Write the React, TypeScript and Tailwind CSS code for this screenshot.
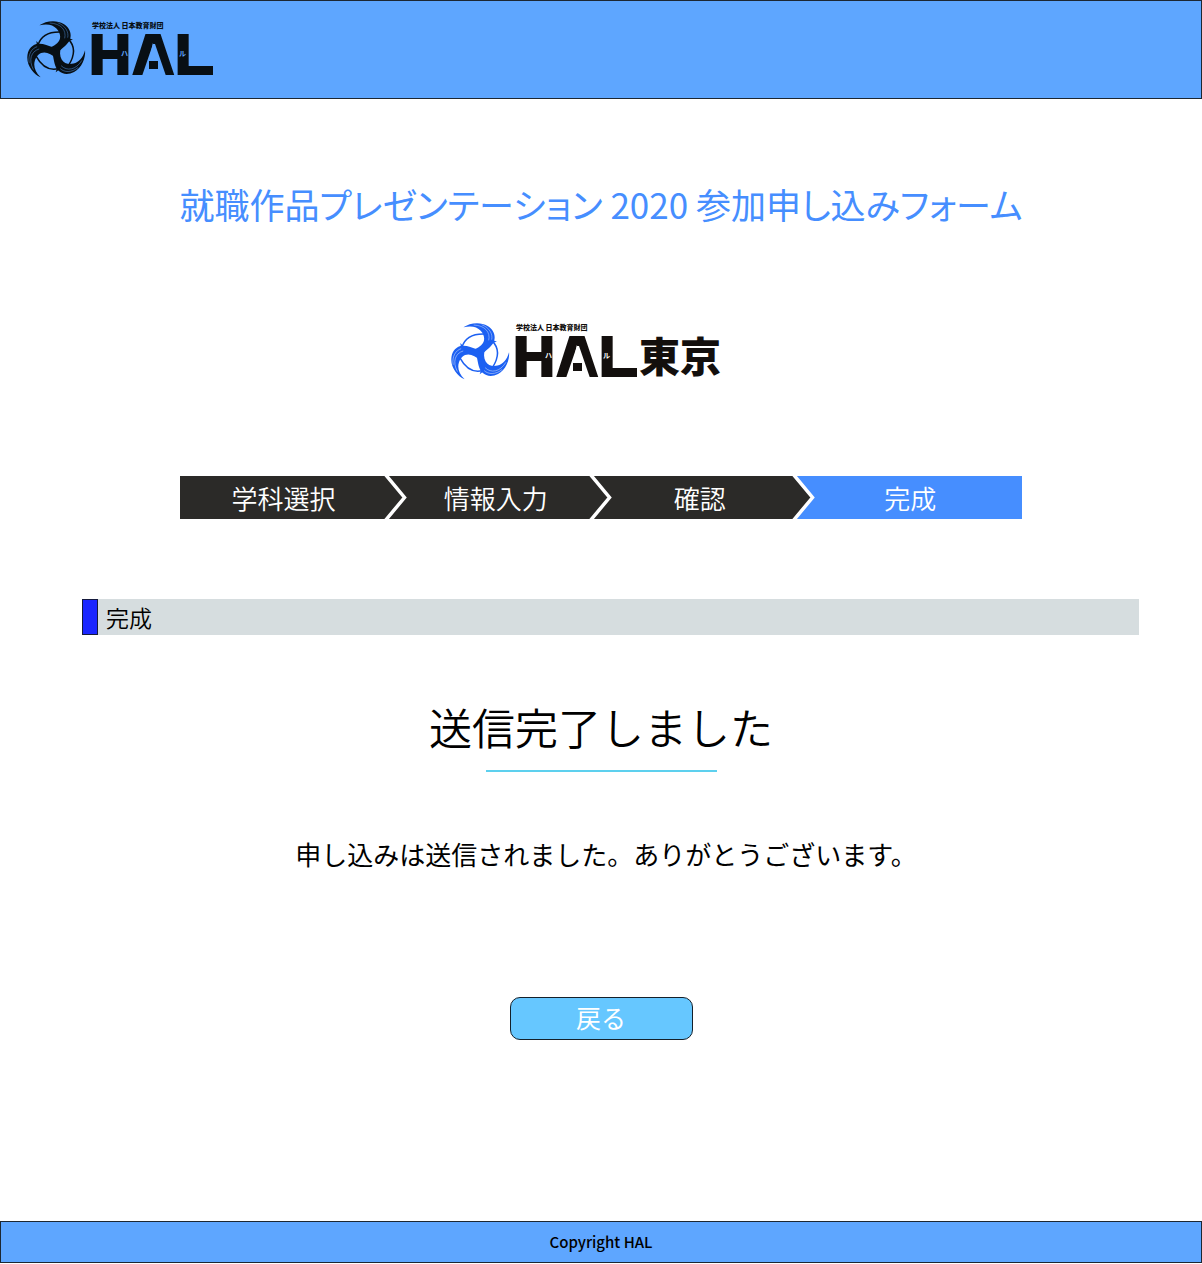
import React from "react";

const steps = [
  { label: "学科選択", pad: "" },
  { label: "情報入力", pad: "pl-3" },
  { label: "確認", pad: "pl-3" },
  { label: "完成", pad: "pl-1" },
];

function EmblemArm({ angle, cut }: { angle: number; cut: string }) {
  return (
    <g transform={`rotate(${angle})`}>
      <path d="M-47-77C-28-91 4-95 26-81C42-71 50-56 46-38C42-22 26-12 11 2L-8 4L-22-9C-6-12 6-20 12-30C19-42 15-56 5-67C-6-79-24-83-47-77Z" />
      <path d="M-56-30L-54-14L-36-14L-47-20Z" />
      <path d="M-51-17C-44-42-22-58 16-57" fill="none" stroke="currentColor" strokeWidth="4.5" />
      <path
        d="M-16-84C18-83 35-62 29-38M8-85C32-76 42-56 38-40"
        fill="none"
        stroke={cut}
        strokeWidth="1.2"
      />
    </g>
  );
}

function Logo({
  emblem,
  ink,
  paper,
  campus,
}: {
  emblem: string;
  ink: string;
  paper: string;
  campus?: string;
}) {
  const width = campus ? 270 : 187;
  return (
    <svg
      width={width}
      height="72"
      viewBox={`0 0 ${width} 72`}
      role="img"
      aria-label={"HAL" + (campus ?? "")}
      className="shrink-0 font-['Noto_Sans_CJK_JP',sans-serif]"
    >
      <g transform="translate(28 31) scale(0.333)" fill="currentColor" className={emblem}>
        <EmblemArm angle={0} cut={paper} />
        <EmblemArm angle={120} cut={paper} />
        <EmblemArm angle={240} cut={paper} />
      </g>
      <g fill={ink}>
        <text x="65" y="8" className="text-[7px] font-black">
          学校法人 日本教育財団
        </text>
        <text x="62 104 148" y="55" className="font-['Inter',sans-serif] text-[56px] font-black">
          HAL
        </text>
        <rect x="170" y="46" width="16" height="9" />
        <path d="M126 24H128L139 56H115Z" fill={paper} />
        <rect x="122" y="41" width="9" height="8" />
        {campus && (
          <text x="188" y="50" className="text-[41px] font-black">
            {campus}
          </text>
        )}
      </g>
      <g fill={paper} className="text-[7px] font-bold">
        <text x="94" y="36">ハ</text>
        <text x="152" y="36">ル</text>
      </g>
    </svg>
  );
}

function Chevron() {
  return (
    <svg
      width="26"
      height="43"
      viewBox="0 0 26 43"
      aria-hidden="true"
      className="absolute left-full top-0 z-10 -ml-1"
    >
      <path d="M0 0H2L21 21.5L2 43H0Z" fill="#2b2a28" />
      <path d="M2-2L21.5 21.5L2 45" fill="none" stroke="#fff" strokeWidth="3.5" />
    </svg>
  );
}

export default function App() {
  return (
    <div className="flex min-h-screen flex-col bg-white font-['Noto_Sans_CJK_JP',sans-serif] text-black">
      <header className="border border-[#1c2733] bg-[#5ea6ff] px-[26px] pt-[19px] pb-[6px]">
        <Logo emblem="text-[#080f14]" ink="#080f14" paper="#5ea6ff" />
      </header>

      <main className="flex flex-1 flex-col items-center">
        <h1 className="mt-[78px] text-[35px] leading-[54px] text-[#468eff] [font-feature-settings:'palt']">
          就職作品プレゼンテーション 2020 参加申し込みフォーム
        </h1>

        <div className="mt-[91px] mr-[30px]">
          <Logo emblem="text-[#1c60f2]" ink="#130f0d" paper="#ffffff" campus="東京" />
        </div>

        <ol className="mt-[82px] grid w-[70%] grid-cols-[206fr_205fr_202fr_226fr] text-[26px] font-[350] leading-[43px] text-white">
          {steps.map((step, i) => (
            <li
              key={step.label}
              aria-current={i === 3 ? "step" : undefined}
              className={`relative text-center ${step.pad} ${i === 3 ? "bg-[#468eff]" : "bg-[#2b2a28]"}`}
            >
              {step.label}
              {i < 3 && <Chevron />}
            </li>
          ))}
        </ol>

        <div className="mt-20 flex w-full pr-[63px] pl-[82px]">
          <span className="w-4 border border-[#151a3c] bg-[#1a26ff]" />
          <h2 className="flex-1 bg-[#d6dddf] pl-2 text-[23px] font-[350] leading-9">完成</h2>
        </div>

        <p className="mt-[61px] text-[43px] font-[350] leading-[60px]">送信完了しました</p>
        <div className="mt-[14px] h-0.5 w-[231px] bg-[#5dd0ee]" />

        <p className="mt-[63px] ml-2.5 text-[26px] leading-[38px]">
          申し込みは送信されました。ありがとうございます。
        </p>

        <button
          type="button"
          className="mt-[124px] h-[43px] w-[183px] cursor-pointer rounded-[10px] border border-[#14202a] bg-[#66c7ff] pb-0.5 text-[25px] text-white"
        >
          戻る
        </button>
      </main>

      <footer className="mb-px border border-[#1c2733] bg-[#5ea6ff] text-center text-[15px] font-medium leading-10">
        Copyright HAL
      </footer>
    </div>
  );
}
